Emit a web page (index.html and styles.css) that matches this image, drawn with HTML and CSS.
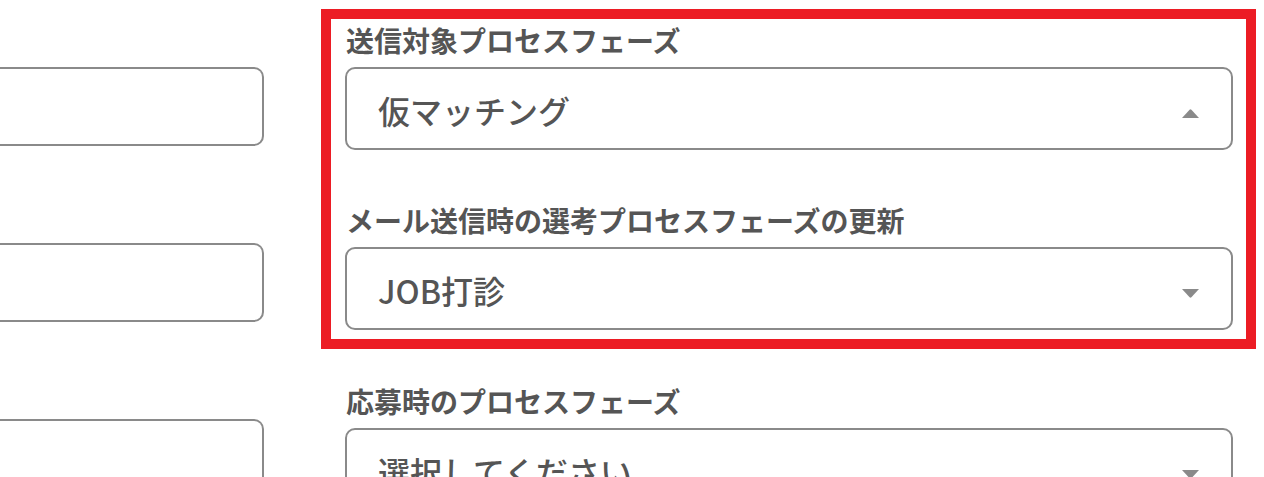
FILE: index.html
```html
<!DOCTYPE html>
<html lang="ja">
<head>
<meta charset="utf-8">
<title>プロセスフェーズ設定</title>
<link rel="stylesheet" href="styles.css">
</head>
<body>
<div class="page">
  <div class="left-col">
    <div class="text-input"></div>
    <div class="text-input"></div>
    <div class="text-input"></div>
  </div>
  <div class="right-col">
    <div class="highlight">
      <div class="field">
        <div class="field-label">送信対象プロセスフェーズ</div>
        <div class="select">
          <span class="select-value">仮マッチング</span>
          <svg class="caret" width="17" height="9" viewBox="0 0 17 9"><path d="M0 9 L7.6 0.8 Q8.5 -0.1 9.4 0.8 L17 9 Z" fill="#8a8a8a"/></svg>
        </div>
      </div>
      <div class="field field-next">
        <div class="field-label">メール送信時の選考プロセスフェーズの更新</div>
        <div class="select">
          <span class="select-value">JOB打診</span>
          <svg class="caret" width="17" height="9" viewBox="0 0 17 9"><path d="M0 0 L7.6 8.2 Q8.5 9.1 9.4 8.2 L17 0 Z" fill="#8a8a8a"/></svg>
        </div>
      </div>
    </div>
    <div class="field field-outside">
      <div class="field-label">応募時のプロセスフェーズ</div>
      <div class="select">
        <span class="select-value">選択してください</span>
        <svg class="caret" width="17" height="9" viewBox="0 0 17 9"><path d="M0 0 L7.6 8.2 Q8.5 9.1 9.4 8.2 L17 0 Z" fill="#8a8a8a"/></svg>
      </div>
    </div>
  </div>
</div>
</body>
</html>
```
FILE: styles.css
```css
html, body {
  margin: 0;
  padding: 0;
  overflow: hidden;
  background: #ffffff;
}

body {
  font-family: "Noto Sans CJK JP", "Noto Sans", sans-serif;
  color: #555555;
}

.page {
  display: flex;
  align-items: flex-start;
  padding-top: 9px;
}

.left-col {
  width: 264px;
  flex: none;
  display: flex;
  flex-direction: column;
  gap: 97px;
  padding-top: 58px;
}

.text-input {
  height: 79px;
  box-sizing: border-box;
  border: 2px solid #8a8a8a;
  border-left: none;
  border-radius: 0 10px 10px 0;
  background: #ffffff;
}

.right-col {
  margin-left: 57px;
  width: 935px;
  flex: none;
}

.highlight {
  border: 10px solid #ec1c24;
  padding: 1px 13px 9px 14px;
}

.field {
  display: flex;
  flex-direction: column;
  gap: 7px;
}

.field-next {
  margin-top: 50px;
}

.field-outside {
  margin: 32px 23px 0 24px;
}

.field-label {
  font-size: 28px;
  line-height: 40px;
  font-weight: 700;
  color: #555555;
  padding-left: 1px;
}

.select {
  height: 83px;
  box-sizing: border-box;
  border: 2px solid #8a8a8a;
  border-radius: 10px;
  display: flex;
  align-items: center;
  justify-content: space-between;
  padding: 0 32px 0 31px;
  background: #ffffff;
}

.select-value {
  font-size: 32px;
  font-weight: 500;
  color: #555555;
  line-height: 40px;
  margin-top: 3px;
}

.caret {
  display: block;
  flex: none;
  margin-top: 10px;
}
```
